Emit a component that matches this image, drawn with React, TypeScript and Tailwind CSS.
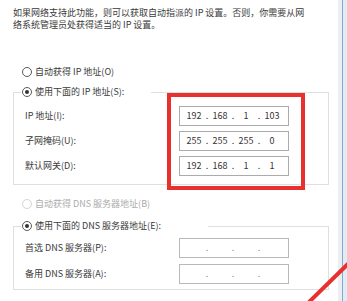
import clsx from "clsx";

const font = "font-['Noto_Sans_CJK_SC',sans-serif]";

function Radio({
  checked,
  disabled,
  label,
}: {
  checked?: boolean;
  disabled?: boolean;
  label: string;
}) {
  return (
    <span className="flex h-[16px] items-center">
      <span
        className={clsx(
          "flex h-[10px] w-[10px] items-center justify-center rounded-full border bg-white",
          disabled ? "border-[#d4d4d4]" : "border-[#5a5a5a]"
        )}
      >
        {checked && <span className="h-[4px] w-[4px] rounded-full bg-[#333]" />}
      </span>
      <span className={clsx("ml-[3px]", disabled ? "text-[#ababab]" : "text-[#3a3a3a]")}>
        {label}
      </span>
    </span>
  );
}

function IpBox({ parts }: { parts?: string[] }) {
  const p = parts ?? ["", "", "", ""];
  return (
    <div
      className={clsx(
        "flex h-[20px] w-[110px] items-center border bg-white pl-[3px] text-[#333]",
        parts ? "border-[#ababab]" : "border-[#b8b8b8]"
      )}
    >
      {p.map((v, i) => (
        <span key={i} className="flex items-center">
          <span className="w-[22px] text-center">{v}</span>
          {i < 3 && (
            <span className={clsx("w-[4px] text-center", parts ? "text-[#333]" : "text-[#888]")}>.</span>
          )}
        </span>
      ))}
    </div>
  );
}

function Row({ label, parts }: { label: string; parts?: string[] }) {
  return (
    <div className="flex h-[20px] items-center">
      <span className="w-[154px] text-[#3a3a3a]">{label}</span>
      <IpBox parts={parts} />
    </div>
  );
}

export default function App() {
  return (
    <div className={clsx("relative flex h-[301px] w-[347px] overflow-hidden bg-white text-[9px] leading-[12px]", font)}>
      <div className="w-[338px] pl-[13px] pt-[7px]">
        <p className="text-[#3a3a3a]">
          如果网络支持此功能，则可以获取自动指派的 IP 设置。否则，你需要从网
          <br />
          络系统管理员处获得适当的 IP 设置。
        </p>

        <div className="ml-[9px] mt-[33px]">
          <Radio label="自动获得 IP 地址(O)" />
        </div>

        <fieldset className="mt-[4px] w-[316px] border border-[#dfdfdf]">
          <legend className="ml-[7px] w-[130px] bg-white pl-[1px]">
            <Radio checked label="使用下面的 IP 地址(S):" />
          </legend>
          <div className="flex flex-col gap-[5px] pb-[8px] pl-[11px] pt-[6px]">
            <Row label="IP 地址(I):" parts={["192", "168", "1", "103"]} />
            <Row label="子网掩码(U):" parts={["255", "255", "255", "0"]} />
            <Row label="默认网关(D):" parts={["192", "168", "1", "1"]} />
          </div>
        </fieldset>

        <div className="ml-[9px] mt-[11px]">
          <Radio disabled label="自动获得 DNS 服务器地址(B)" />
        </div>

        <fieldset className="mt-[6px] w-[316px] border border-[#dfdfdf]">
          <legend className="ml-[7px] w-[187px] bg-white pl-[1px]">
            <Radio checked label="使用下面的 DNS 服务器地址(E):" />
          </legend>
          <div className="flex flex-col gap-[6px] pb-[5px] pl-[11px] pt-[4px]">
            <Row label="首选 DNS 服务器(P):" />
            <Row label="备用 DNS 服务器(A):" />
          </div>
        </fieldset>
      </div>

      {/* window edge */}
      <div className="w-[4px] bg-[#eceff2]" />
      <div className="w-[1px] bg-[#7fabd8]" />
      <div className="flex-1 bg-[#e2eaf2]" />

      {/* red annotations */}
      <div className="absolute left-[167px] top-[93px] h-[97px] w-[138px] border-[4px] border-[#e8302f]" />
      <svg className="absolute inset-0" width="347" height="301" viewBox="0 0 347 301">
        <line x1="305" y1="306" x2="352" y2="260" stroke="#e8302f" strokeWidth="4" />
      </svg>
    </div>
  );
}
